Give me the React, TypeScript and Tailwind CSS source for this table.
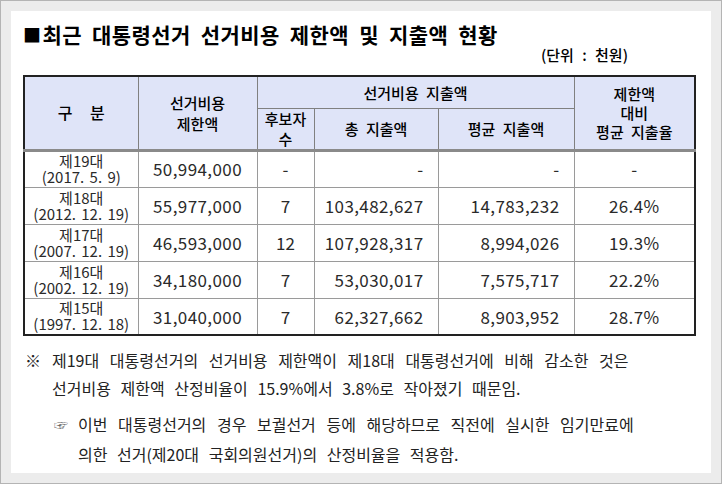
const rows = [
  { no: "제19대", date: "(2017. 5. 9)", limit: "50,994,000", cand: "-", total: "-", avg: "-", rate: "-" },
  { no: "제18대", date: "(2012. 12. 19)", limit: "55,977,000", cand: "7", total: "103,482,627", avg: "14,783,232", rate: "26.4%" },
  { no: "제17대", date: "(2007. 12. 19)", limit: "46,593,000", cand: "12", total: "107,928,317", avg: "8,994,026", rate: "19.3%" },
  { no: "제16대", date: "(2002. 12. 19)", limit: "34,180,000", cand: "7", total: "53,030,017", avg: "7,575,717", rate: "22.2%" },
  { no: "제15대", date: "(1997. 12. 18)", limit: "31,040,000", cand: "7", total: "62,327,662", avg: "8,903,952", rate: "28.7%" },
];

const font = "font-['Noto_Sans_CJK_KR','Noto_Sans',sans-serif]";
const headCell = "border border-[#808080] border-b-[3px] border-b-[#8a8a8a] font-medium";
const cell = "border border-[#9a9a9a]";

export default function App() {
  return (
    <div className={`w-[722px] h-[484px] bg-[#ececec] border border-[#b4b4b4] p-[10px] ${font} text-black`}>
      <div className="w-[700px] h-[462px] bg-white pt-[12px] pl-[12px]">
        <div className="flex items-center h-[22px] text-[21px] font-bold leading-none tracking-[0.4px] [word-spacing:5px]">
          <span className="text-[18px] mr-[1px]">■</span>
          <span>최근 대통령선거 선거비용 제한액 및 지출액 현황</span>
        </div>
        <div className="h-[30px] pr-[83px] flex items-start justify-end text-[15px] leading-[20px] font-medium [word-spacing:5px]">
          (단위 : 천원)
        </div>
        <table className="border-collapse table-fixed border-2 border-[#222] w-[671px]">
          <colgroup>
            <col className="w-[114px]" />
            <col className="w-[119px]" />
            <col className="w-[57px]" />
            <col className="w-[124px]" />
            <col className="w-[136px]" />
            <col className="w-[121px]" />
          </colgroup>
          <thead className="bg-[#dfe4f8] text-[15px] leading-[19px]">
            <tr className="h-[32px]">
              <th rowSpan={2} className={`${headCell} text-[16px] [word-spacing:14px]`}>구 분</th>
              <th rowSpan={2} className={`${headCell} leading-[21px]`}>
                선거비용
                <br />
                제한액
              </th>
              <th colSpan={3} className="border border-[#808080] font-medium [word-spacing:4px]">선거비용 지출액</th>
              <th rowSpan={2} className={`${headCell} [word-spacing:4px]`}>
                제한액
                <br />
                대비
                <br />
                평균 지출율
              </th>
            </tr>
            <tr className="h-[38px]">
              <th className={`${headCell} leading-[20px]`}>
                후보자
                <br />수
              </th>
              <th className={`${headCell} [word-spacing:4px]`}>총 지출액</th>
              <th className={`${headCell} [word-spacing:4px]`}>평균 지출액</th>
            </tr>
          </thead>
          <tbody className="text-[#2a2a2a]">
            {rows.map((r) => (
              <tr key={r.no} className="h-[37px]">
                <td className={`${cell} text-center text-[15px] leading-[16px] [word-spacing:2px]`}>
                  {r.no}
                  <br />
                  {r.date}
                </td>
                <td className={`${cell} text-center text-[17px] tracking-[0.4px]`}>{r.limit}</td>
                <td className={`${cell} text-center text-[17px]`}>{r.cand}</td>
                <td className={`${cell} text-right pr-[14px] text-[17px] tracking-[0.4px]`}>{r.total}</td>
                <td className={`${cell} text-right pr-[14px] text-[17px] tracking-[0.4px]`}>{r.avg}</td>
                <td className={`${cell} text-center text-[17px] tracking-[0.4px]`}>{r.rate}</td>
              </tr>
            ))}
          </tbody>
        </table>
        <div className="mt-[11px] text-[16px] text-[#222] [word-spacing:6px]">
          <div className="h-[26px] flex items-center [word-spacing:7px]">
            <span className="w-[29px] pl-[2px]">※</span>
            <span>제19대 대통령선거의 선거비용 제한액이 제18대 대통령선거에 비해 감소한 것은</span>
          </div>
          <div className="h-[30px] flex items-center pl-[29px]">
            선거비용 제한액 산정비율이 15.9%에서 3.8%로 작아졌기 때문임.
          </div>
          <div className="h-[36px] flex items-center pt-[6px] pl-[31px] [word-spacing:7px]">
            <span className="w-[24px] text-[14px] text-[#666]">☞</span>
            <span>이번 대통령선거의 경우 보궐선거 등에 해당하므로 직전에 실시한 임기만료에</span>
          </div>
          <div className="h-[30px] flex items-center pl-[55px]">
            의한 선거(제20대 국회의원선거)의 산정비율을 적용함.
          </div>
        </div>
      </div>
    </div>
  );
}
